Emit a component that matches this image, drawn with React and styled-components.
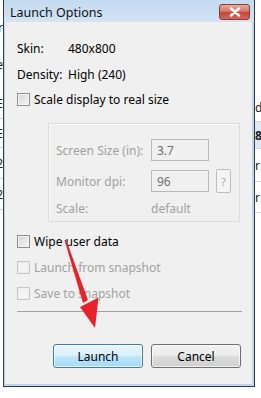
import styled, { createGlobalStyle } from "styled-components";

const GlobalStyle = createGlobalStyle`
  html, body {
    margin: 0;
    padding: 0;
  }
  body {
    width: 261px;
    height: 398px;
    overflow: hidden;
    background: #fff;
    font-family: "Noto Sans", "Liberation Sans", sans-serif;
    font-size: 12px;
    color: #000;
  }
`;

const Screen = styled.div`
  position: relative;
  display: flex;
  width: 261px;
  height: 398px;
  overflow: hidden;
  background: #fff;
`;

const Strip = styled.div`
  width: ${(p) => p.w}px;
  flex: none;
  overflow: hidden;
  display: flex;
  flex-direction: column;
  padding-top: ${(p) => p.top || 0}px;
  box-sizing: border-box;
`;

const StripRow = styled.div`
  height: ${(p) => p.h || 26}px;
  flex: none;
  display: flex;
  align-items: center;
  justify-content: ${(p) => (p.right ? "flex-end" : "flex-start")};
  border-bottom: ${(p) => (p.line ? "1px solid #d6d6d6" : "none")};
  background: ${(p) => p.bg || "transparent"};
  font-size: 12px;
  font-weight: ${(p) => (p.bold ? 700 : 400)};
  white-space: nowrap;
  color: #222;
`;

const Window = styled.div`
  width: 252px;
  height: 387px;
  flex: none;
  box-sizing: border-box;
  border: 1px solid #2e3d4e;
  border-top: none;
  background: #bcd4ec;
  display: flex;
  flex-direction: column;
`;

const TitleBar = styled.div`
  height: 22px;
  flex: none;
  display: flex;
  align-items: center;
  justify-content: space-between;
  padding: 0 4px 0 6px;
  background: linear-gradient(180deg, #c4daf1 0%, #cddff3 60%, #d3e3f4 100%);
`;

const Title = styled.div`
  font-size: 12.5px;
  color: #111;
  margin-top: 2px;
`;

const CloseButton = styled.div`
  width: 31px;
  height: 16px;
  margin-top: 2px;
  box-sizing: border-box;
  border: 1px solid #8a3b33;
  border-radius: 3px;
  background: linear-gradient(180deg, #e9a99b 0%, #d7786a 45%, #c4483a 55%, #d2695a 100%);
  display: flex;
  align-items: center;
  justify-content: center;
`;

const Client = styled.div`
  flex: 1;
  margin: 0 2px 2px 1px;
  background: #f0f0f0;
  padding: 13px 10px 16px 12px;
  display: flex;
  flex-direction: column;
`;

const InfoRow = styled.div`
  height: 26px;
  display: flex;
  align-items: center;
`;

const InfoLabel = styled.span`
  width: 51px;
  flex: none;
`;

const CheckRow = styled.label`
  height: ${(p) => p.h || 26}px;
  display: flex;
  align-items: center;
  gap: 4px;
  color: ${(p) => (p.disabled ? "#a2a2a2" : "#000")};
`;

const Box = styled.span`
  width: 13px;
  height: 13px;
  flex: none;
  box-sizing: border-box;
  border: 1px solid ${(p) => (p.disabled ? "#c6c6c6" : "#8e8f8f")};
  background: ${(p) =>
    p.disabled
      ? "#f4f4f4"
      : "linear-gradient(135deg, #d2d2d2 0%, #e6e6e6 50%, #f5f5f5 100%)"};
  box-shadow: inset 0 0 0 1px ${(p) => (p.disabled ? "#ececec" : "#f4f4f4")};
`;

const Group = styled.div`
  margin: 12px 0 6px 31px;
  width: 192px;
  height: 99px;
  box-sizing: border-box;
  border: 1px solid #dcdcdc;
  box-shadow: inset 1px 1px 0 #fafafa;
  padding: 15px 0 0 7px;
  display: flex;
  flex-direction: column;
  color: #a0a0a0;
`;

const FieldRow = styled.div`
  height: ${(p) => p.h || 22}px;
  margin-top: ${(p) => p.mt || 0}px;
  display: flex;
  align-items: center;
`;

const FieldLabel = styled.span`
  width: 95px;
  flex: none;
`;

const TextBox = styled.div`
  width: 58px;
  height: 22px;
  box-sizing: border-box;
  border: 1px solid #b9b9b9;
  background: #f0f0f0;
  padding-left: 5px;
  display: flex;
  align-items: center;
  color: #6f6f6f;
`;

const HelpButton = styled.div`
  width: 15px;
  height: 24px;
  margin-left: 7px;
  box-sizing: border-box;
  border: 1px solid #bdbdbd;
  border-radius: 2px;
  background: #f4f4f4;
  display: flex;
  align-items: center;
  justify-content: center;
  color: #a8a8a8;
  font-size: 11px;
`;

const Separator = styled.div`
  margin-top: 5px;
  height: 1px;
  background: #a0a0a0;
`;

const Buttons = styled.div`
  margin-top: 32px;
  display: flex;
  justify-content: flex-end;
  gap: 8px;
  padding-right: 1px;
`;

const Button = styled.div`
  width: 90px;
  height: 24px;
  box-sizing: border-box;
  border: 1px solid ${(p) => (p.primary ? "#3c7fb1" : "#707070")};
  border-radius: 3px;
  background: ${(p) =>
    p.primary
      ? "linear-gradient(180deg, #eaf6fd 0%, #d9f0fc 48%, #bee6fd 52%, #a7d9f5 100%)"
      : "linear-gradient(180deg, #f2f2f2 0%, #ebebeb 48%, #dddddd 52%, #cfcfcf 100%)"};
  box-shadow: inset 0 0 0 1px rgba(255, 255, 255, 0.7);
  display: flex;
  align-items: center;
  justify-content: center;
  color: #000;
`;

const Arrow = styled.svg`
  position: absolute;
  left: 0;
  top: 0;
  width: 261px;
  height: 398px;
  pointer-events: none;
`;

export default function App() {
  return (
    <>
      <GlobalStyle />
      <Screen>
        <Strip w={3} top={14}>
          <StripRow right h={26}>r</StripRow>
          <StripRow right h={48}>e</StripRow>
          <StripRow right line h={30}>E</StripRow>
          <StripRow right line h={28}>E</StripRow>
          <StripRow right line h={30}>2</StripRow>
          <StripRow right line h={30}>2</StripRow>
        </Strip>
        <Window>
          <TitleBar>
            <Title>Launch Options</Title>
            <CloseButton>
              <svg width="12" height="10" viewBox="0 0 12 10">
                <path
                  d="M2 1.5 L10 8.5 M10 1.5 L2 8.5"
                  stroke="#fff"
                  strokeWidth="2.4"
                  strokeLinecap="round"
                />
              </svg>
            </CloseButton>
          </TitleBar>
          <Client>
            <InfoRow>
              <InfoLabel>Skin:</InfoLabel>
              <span>480x800</span>
            </InfoRow>
            <InfoRow>
              <InfoLabel>Density:</InfoLabel>
              <span>High (240)</span>
            </InfoRow>
            <CheckRow h={24}>
              <Box />
              Scale display to real size
            </CheckRow>
            <Group>
              <FieldRow>
                <FieldLabel>Screen Size (in):</FieldLabel>
                <TextBox>3.7</TextBox>
              </FieldRow>
              <FieldRow mt={9}>
                <FieldLabel>Monitor dpi:</FieldLabel>
                <TextBox>96</TextBox>
                <HelpButton>?</HelpButton>
              </FieldRow>
              <FieldRow mt={4} h={24}>
                <FieldLabel>Scale:</FieldLabel>
                <span>default</span>
              </FieldRow>
            </Group>
            <CheckRow>
              <Box />
              Wipe user data
            </CheckRow>
            <CheckRow disabled>
              <Box disabled />
              Launch from snapshot
            </CheckRow>
            <CheckRow disabled>
              <Box disabled />
              Save to snapshot
            </CheckRow>
            <Separator />
            <Buttons>
              <Button primary>Launch</Button>
              <Button>Cancel</Button>
            </Buttons>
          </Client>
        </Window>
        <Strip w={6} top={94}>
          <StripRow line h={27}>dr</StripRow>
          <StripRow line h={26} bold bg="#dfe8f2">8I</StripRow>
          <StripRow line h={32}>r</StripRow>
          <StripRow line h={30}>r</StripRow>
        </Strip>
        <Arrow viewBox="0 0 261 398">
          <polygon points="64.5,240 66.2,240 88,300 83,303" fill="#e8222a" />
          <polygon points="80,307 98.5,297.5 95,328" fill="#e8222a" />
        </Arrow>
      </Screen>
    </>
  );
}
